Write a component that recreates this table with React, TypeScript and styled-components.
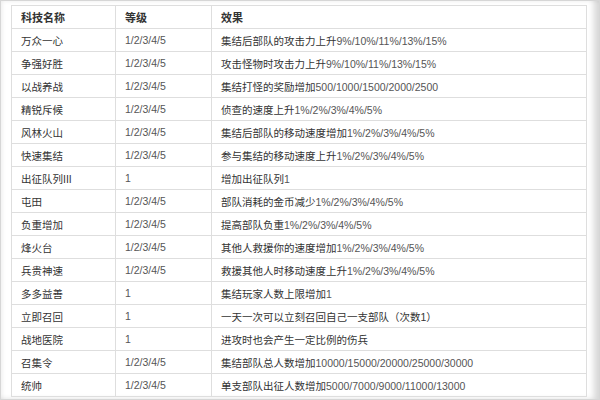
import React from "react";
import styled, { createGlobalStyle } from "styled-components";

const Global = createGlobalStyle`
  html, body { margin: 0; padding: 0; background: #fff; }
  body { font-family: "Liberation Sans", "Noto Sans CJK SC", sans-serif; }
`;

const Frame = styled.div`
  width: 600px;
  height: 400px;
  box-sizing: border-box;
  border: 1px solid #d6d6d6;
  background: #fff;
  padding: 4px 0 0 10px;
  overflow: hidden;
  box-shadow: inset -9px -3px 6px -4px rgba(0, 0, 0, 0.16),
    inset 3px 2px 4px -2px rgba(0, 0, 0, 0.08);
`;

const Table = styled.table`
  width: 575px;
  border-collapse: collapse;
  table-layout: fixed;
  font-size: 10.5px;
  color: #333;
`;

const Col = styled.col<{ $w: number }>`
  width: ${(p) => p.$w}px;
`;

const Th = styled.th`
  height: 23px;
  box-sizing: border-box;
  border: 1px solid #dedede;
  padding: 0 0 0 9px;
  text-align: left;
  font-size: 11px;
  font-weight: bold;
  color: #333;
  background: #fff;
`;

const Td = styled.td`
  height: 23px;
  box-sizing: border-box;
  border: 1px solid #dedede;
  padding: 0 0 0 9px;
  text-align: left;
  white-space: nowrap;
  color: #333;
`;

const Num = styled.span`
  color: #555;
`;

const rows: [string, string, string, string][] = [
  ["万众一心", "1/2/3/4/5", "集结后部队的攻击力上升", "9%/10%/11%/13%/15%"],
  ["争强好胜", "1/2/3/4/5", "攻击怪物时攻击力上升", "9%/10%/11%/13%/15%"],
  ["以战养战", "1/2/3/4/5", "集结打怪的奖励增加", "500/1000/1500/2000/2500"],
  ["精锐斥候", "1/2/3/4/5", "侦查的速度上升", "1%/2%/3%/4%/5%"],
  ["风林火山", "1/2/3/4/5", "集结后部队的移动速度增加", "1%/2%/3%/4%/5%"],
  ["快速集结", "1/2/3/4/5", "参与集结的移动速度上升", "1%/2%/3%/4%/5%"],
  ["出征队列III", "1", "增加出征队列", "1"],
  ["屯田", "1/2/3/4/5", "部队消耗的金币减少", "1%/2%/3%/4%/5%"],
  ["负重增加", "1/2/3/4/5", "提高部队负重", "1%/2%/3%/4%/5%"],
  ["烽火台", "1/2/3/4/5", "其他人救援你的速度增加", "1%/2%/3%/4%/5%"],
  ["兵贵神速", "1/2/3/4/5", "救援其他人时移动速度上升", "1%/2%/3%/4%/5%"],
  ["多多益善", "1", "集结玩家人数上限增加", "1"],
  ["立即召回", "1", "一天一次可以立刻召回自己一支部队（次数1）", ""],
  ["战地医院", "1", "进攻时也会产生一定比例的伤兵", ""],
  ["召集令", "1/2/3/4/5", "集结部队总人数增加", "10000/15000/20000/25000/30000"],
  ["统帅", "1/2/3/4/5", "单支部队出征人数增加", "5000/7000/9000/11000/13000"],
];

export default function App() {
  return (
    <>
      <Global />
      <Frame>
        <Table>
          <colgroup>
            <Col $w={104} />
            <Col $w={96} />
            <Col $w={375} />
          </colgroup>
          <thead>
            <tr>
              <Th>科技名称</Th>
              <Th>等级</Th>
              <Th>效果</Th>
            </tr>
          </thead>
          <tbody>
            {rows.map(([name, lv, txt, num]) => (
              <tr key={name}>
                <Td>{name}</Td>
                <Td>
                  <Num>{lv}</Num>
                </Td>
                <Td>
                  {txt}
                  <Num>{num}</Num>
                </Td>
              </tr>
            ))}
          </tbody>
        </Table>
      </Frame>
    </>
  );
}
